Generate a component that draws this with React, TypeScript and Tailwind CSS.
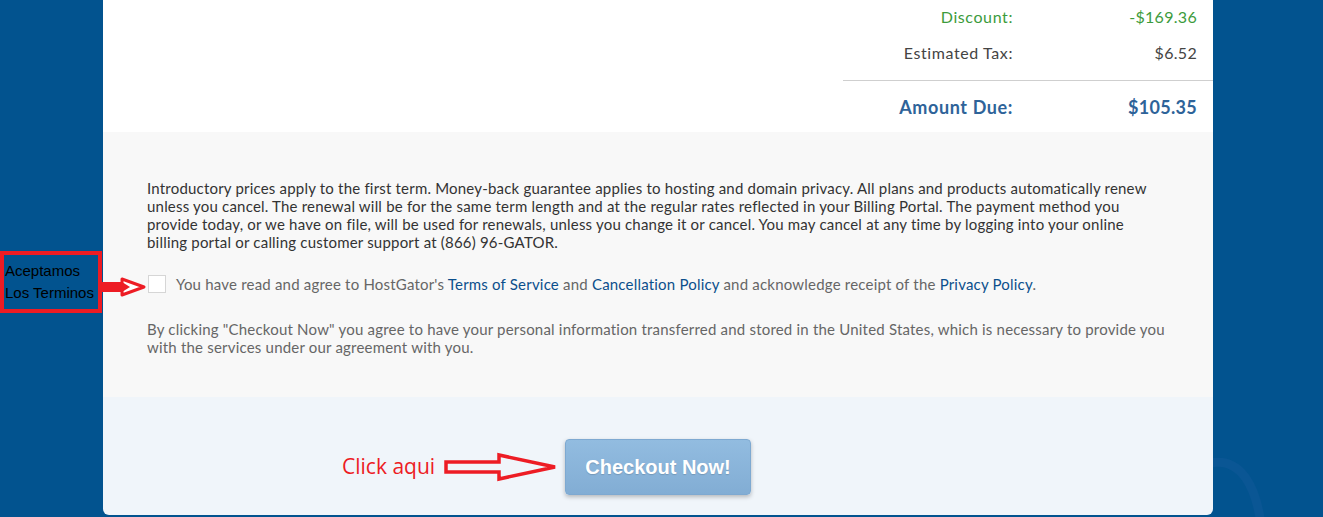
import React from 'react';

const font = { fontFamily: 'Lato, "Noto Sans", sans-serif' };

const SummaryRow = ({ label, value, className }: { label: string; value: string; className: string }) => (
  <div className={`grid grid-cols-[170px_184px] items-center ${className}`}>
    <span className="text-right tracking-[0.6px]">{label}</span>
    <span className="text-right tracking-[0.3px]">{value}</span>
  </div>
);

const App = () => {
  return (
    <div className="relative h-[517px] w-[1323px] overflow-hidden bg-[#02538f]" style={font}>
      {/* decorative arc behind the card */}
      <svg className="absolute left-[1180px] top-[455px]" width="120" height="80" viewBox="0 0 120 80">
        <path d="M30 8 C 60 2, 78 30, 82 80" fill="none" stroke="#0a5694" strokeWidth="9" />
      </svg>

      <div className="relative ml-[103px] flex w-[1110px] flex-col overflow-hidden rounded-b-md">
        {/* order summary */}
        <div className="flex h-[132px] justify-end overflow-hidden bg-white">
          <div className="flex w-[370px] flex-col">
            <SummaryRow label="Discount:" value="-$169.36" className="h-[34px] shrink-0 text-[16px] text-[#3c9b3c]" />
            <SummaryRow label="Estimated Tax:" value="$6.52" className="h-[38px] shrink-0 text-[16px] text-[#444]" />
            <div className="mt-[8px] h-px shrink-0 bg-[#cfcfcf]" />
            <SummaryRow label="Amount Due:" value="$105.35" className="h-[52px] shrink-0 text-[18px] font-bold text-[#2e6399]" />
          </div>
        </div>

        {/* terms */}
        <div className="h-[265px] bg-[#f8f8f8] pl-[44px] pr-[34px] pt-[47px] text-[15px] leading-[18px] tracking-[0.2px]">
          <p className="text-[#333]">
            Introductory prices apply to the first term. Money-back guarantee applies to hosting and domain privacy. All plans and products automatically renew
            <br />
            unless you cancel. The renewal will be for the same term length and at the regular rates reflected in your Billing Portal. The payment method you
            <br />
            provide today, or we have on file, will be used for renewals, unless you change it or cancel. You may cancel at any time by logging into your online
            <br />
            billing portal or calling customer support at (866) 96-GATOR.
          </p>
          <label className="mt-[24px] flex items-center gap-[10px] text-[#666]">
            <span className="ml-px h-[18px] w-[18px] shrink-0 border border-[#d6d6d6] bg-white" />
            <span>
              You have read and agree to HostGator's <a className="text-[#0b4f8c]">Terms of Service</a> and{' '}
              <a className="text-[#0b4f8c]">Cancellation Policy</a> and acknowledge receipt of the{' '}
              <a className="text-[#0b4f8c]">Privacy Policy</a>.
            </span>
          </label>
          <p className="mt-[27px] text-[#666]">
            By clicking "Checkout Now" you agree to have your personal information transferred and stored in the United States, which is necessary to provide you with the services under our agreement with you.
          </p>
        </div>

        {/* checkout */}
        <div className="flex h-[118px] justify-center bg-[#f0f5fa] pt-[42px]">
          <button
            className="h-[56px] w-[186px] rounded-[4px] border border-[#7ea9d1] bg-gradient-to-b from-[#92bce0] to-[#82add4] text-[20px] font-bold text-white shadow-[0_2px_4px_rgba(0,0,0,0.25)] [text-shadow:0_1px_1px_rgba(0,0,0,0.15)]"
            style={{ fontFamily: '"Liberation Sans", Arial, sans-serif' }}
          >
            Checkout Now!
          </button>
        </div>
      </div>

      {/* annotation: terms box */}
      <div
        className="absolute left-0 top-[251px] flex h-[62px] w-[102px] flex-col justify-center border-[4px] border-[#ed1c24] pl-[1px] text-[15px] leading-[22px] text-black"
        style={{ fontFamily: '"Liberation Sans", Arial, sans-serif' }}
      >
        <span>Aceptamos</span>
        <span>Los Terminos</span>
      </div>
      <svg className="absolute left-[100px] top-[275px]" width="48" height="24" viewBox="0 0 48 24">
        <rect x="0" y="7" width="22" height="10" fill="#ed1c24" />
        <path d="M22 4 L44 12 L22 20 Z" fill="#fff" stroke="#ed1c24" strokeWidth="3" strokeLinejoin="round" />
        <path d="M22 7 L30 12 L22 17 Z" fill="#ed1c24" />
      </svg>

      {/* annotation: click here */}
      <span
        className="absolute left-[342px] top-[452px] text-[21px] leading-[28px] text-[#ed1c24]"
        style={{ fontFamily: '"Open Sans", sans-serif' }}
      >
        Click aqui
      </span>
      <svg className="absolute left-[443px] top-[452px]" width="116" height="30" viewBox="0 0 116 30">
        <path
          d="M3 10 L56 10 L56 3 L112 15 L56 27 L56 20 L3 20 Z"
          fill="none"
          stroke="#ed1c24"
          strokeWidth="3.5"
          strokeLinejoin="miter"
        />
      </svg>
    </div>
  );
};

export default App;
